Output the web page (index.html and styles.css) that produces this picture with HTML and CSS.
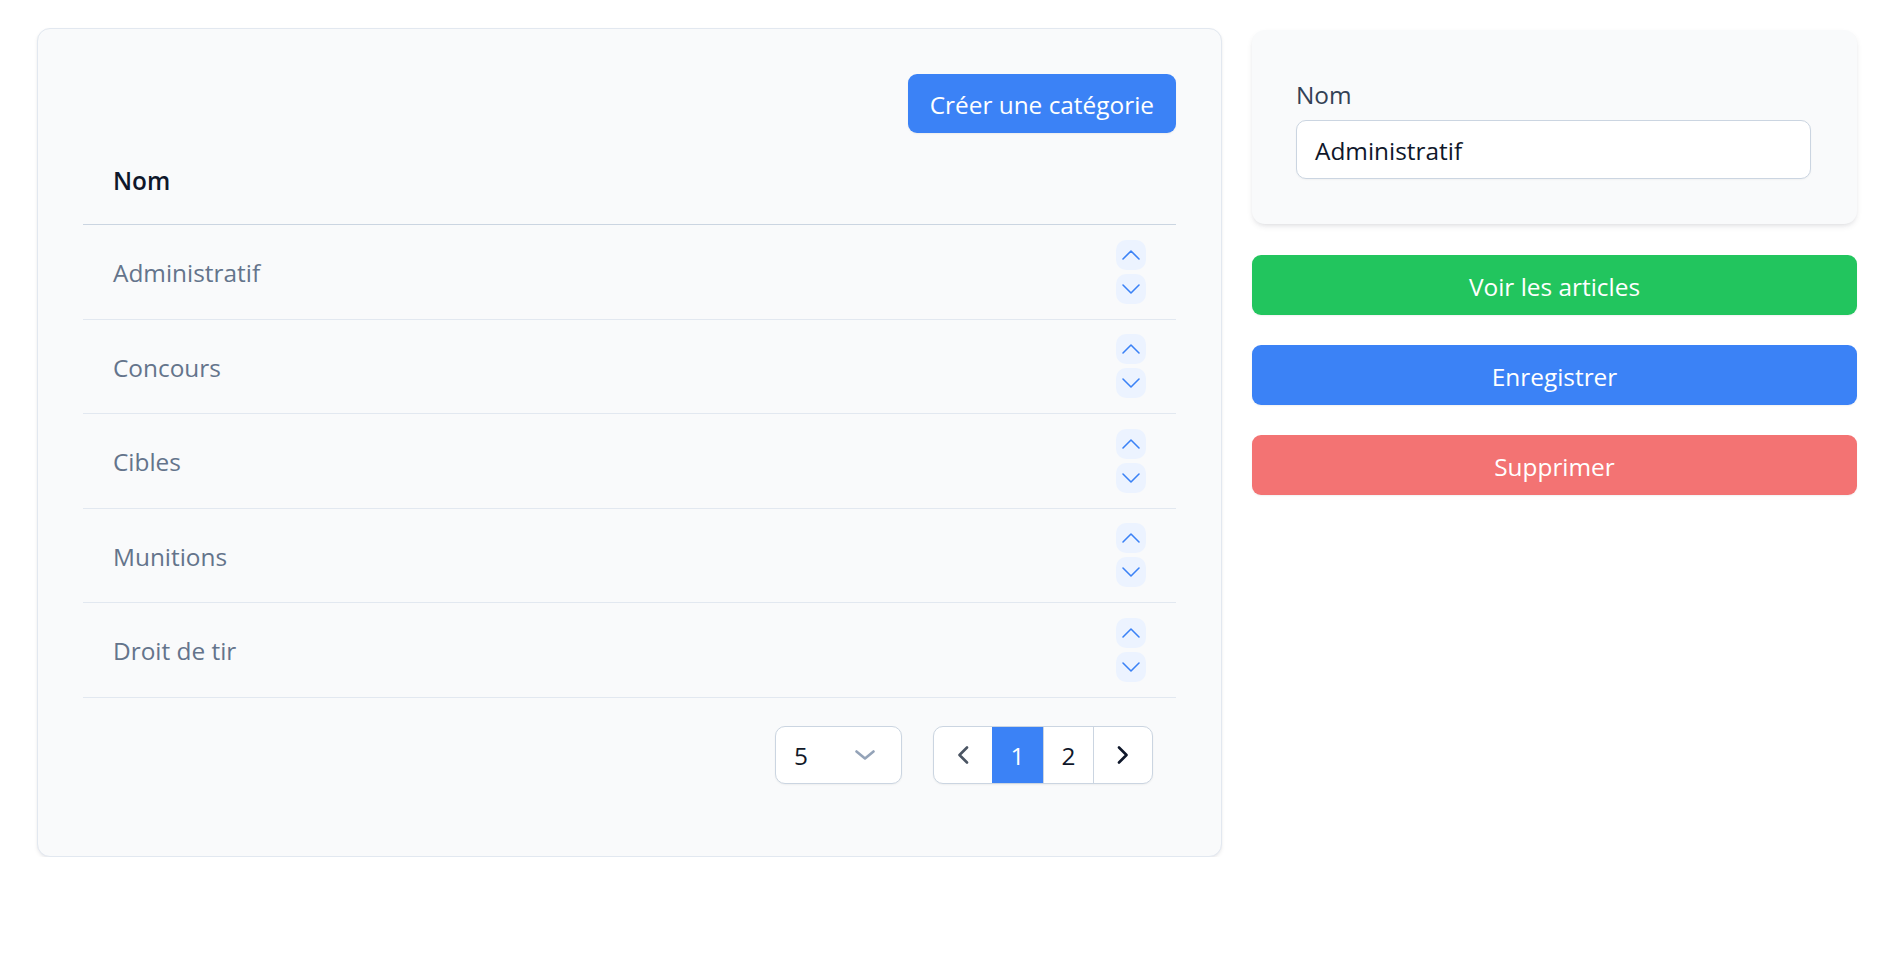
FILE: index.html
```html
<!DOCTYPE html>
<html lang="fr">
<head>
<meta charset="utf-8">
<title>Catégories</title>
<link rel="stylesheet" href="styles.css">
</head>
<body>
<div class="page">
  <section class="list-card">
    <div class="toolbar">
      <button class="btn btn-blue btn-create">Créer une catégorie</button>
    </div>
    <div class="table">
      <div class="thead">Nom</div>
      <div class="row">
        <span class="name">Administratif</span>
        <div class="order">
          <button class="ord"><svg viewBox="0 0 30 30" width="30" height="30"><path d="M7 19 L15 11 L23 19" /></svg></button>
          <button class="ord"><svg viewBox="0 0 30 30" width="30" height="30"><path d="M7 11 L15 19 L23 11" /></svg></button>
        </div>
      </div>
      <div class="row">
        <span class="name">Concours</span>
        <div class="order">
          <button class="ord"><svg viewBox="0 0 30 30" width="30" height="30"><path d="M7 19 L15 11 L23 19" /></svg></button>
          <button class="ord"><svg viewBox="0 0 30 30" width="30" height="30"><path d="M7 11 L15 19 L23 11" /></svg></button>
        </div>
      </div>
      <div class="row">
        <span class="name">Cibles</span>
        <div class="order">
          <button class="ord"><svg viewBox="0 0 30 30" width="30" height="30"><path d="M7 19 L15 11 L23 19" /></svg></button>
          <button class="ord"><svg viewBox="0 0 30 30" width="30" height="30"><path d="M7 11 L15 19 L23 11" /></svg></button>
        </div>
      </div>
      <div class="row">
        <span class="name">Munitions</span>
        <div class="order">
          <button class="ord"><svg viewBox="0 0 30 30" width="30" height="30"><path d="M7 19 L15 11 L23 19" /></svg></button>
          <button class="ord"><svg viewBox="0 0 30 30" width="30" height="30"><path d="M7 11 L15 19 L23 11" /></svg></button>
        </div>
      </div>
      <div class="row">
        <span class="name">Droit de tir</span>
        <div class="order">
          <button class="ord"><svg viewBox="0 0 30 30" width="30" height="30"><path d="M7 19 L15 11 L23 19" /></svg></button>
          <button class="ord"><svg viewBox="0 0 30 30" width="30" height="30"><path d="M7 11 L15 19 L23 11" /></svg></button>
        </div>
      </div>
    </div>
    <div class="pager-bar">
      <div class="select">
        <span class="sel-val">5</span>
        <svg class="sel-chev" viewBox="0 0 20 10" width="20" height="10"><path d="M1.5 1.5 L10 8.5 L18.5 1.5" /></svg>
      </div>
      <div class="pager">
        <button class="pg pg-prev"><svg viewBox="0 0 12 18" width="12" height="18"><path d="M10 1.5 L2.5 9 L10 16.5" /></svg></button>
        <button class="pg pg-num pg-active">1</button>
        <button class="pg pg-num">2</button>
        <button class="pg pg-next"><svg viewBox="0 0 12 18" width="12" height="18"><path d="M2 1.5 L9.5 9 L2 16.5" /></svg></button>
      </div>
    </div>
  </section>

  <aside class="side">
    <div class="form-card">
      <label class="label">Nom</label>
      <div class="input">Administratif</div>
    </div>
    <button class="btn btn-wide btn-green">Voir les articles</button>
    <button class="btn btn-wide btn-blue">Enregistrer</button>
    <button class="btn btn-wide btn-red">Supprimer</button>
  </aside>
</div>
</body>
</html>
```

FILE: styles.css
```css
* { box-sizing: border-box; }

body {
  margin: 0;
  background: #ffffff;
  font-family: "Open Sans", "Noto Sans", "Liberation Sans", sans-serif;
  font-size: 24.4px;
  line-height: 36px;
  color: #111827;
}

button {
  font-family: inherit;
  font-size: inherit;
  line-height: inherit;
  border: 0;
  margin: 0;
  padding: 0;
  background: none;
  cursor: pointer;
}

.page {
  display: grid;
  grid-template-columns: 1185px 605px;
  column-gap: 30px;
  align-items: start;
  padding: 28px 0 0 37px;
}

/* left card */
.list-card {
  background: #f9fafb;
  border: 1px solid #e2e8f0;
  border-radius: 13px;
  box-shadow: 0 2px 4px rgba(15, 23, 42, 0.06), 0 1px 2px rgba(15, 23, 42, 0.04);
  padding: 45px;
}

.toolbar {
  display: flex;
  justify-content: flex-end;
}

.btn {
  color: #ffffff;
  border-radius: 9px;
  box-shadow: 0 1px 2px rgba(0, 0, 0, 0.06);
}

.btn-create {
  height: 59px;
  padding: 3px 22px 0;
}

.btn-blue { background: #3b82f6; }
.btn-green { background: #22c55e; }
.btn-red { background: #f37373; }

.thead {
  padding: 30px 30px 25px;
  font-weight: 600;
  color: #0f172a;
  border-bottom: 1px solid #cbd5e1;
}

.row {
  height: 94.5px;
  display: flex;
  align-items: center;
  justify-content: space-between;
  padding: 0 30px;
  border-bottom: 1px solid #e2e8f0;
}

.name {
  color: #64748b;
  padding-top: 3px;
}

.order {
  display: flex;
  flex-direction: column;
  gap: 4px;
}

.ord {
  width: 30px;
  height: 30px;
  border-radius: 10px;
  background: #ecf3ff;
  display: flex;
}

.ord svg path {
  fill: none;
  stroke: #3b82f6;
  stroke-width: 1.6;
  stroke-linecap: round;
  stroke-linejoin: round;
}

/* pagination */
.pager-bar {
  display: flex;
  justify-content: flex-end;
  align-items: center;
  gap: 31px;
  padding: 28px 23px 27px 0;
}

.select {
  width: 127px;
  height: 58px;
  background: #ffffff;
  border: 1.5px solid #cbd5e1;
  border-radius: 10px;
  display: flex;
  align-items: center;
  justify-content: space-between;
  padding: 0 26px 0 18px;
  color: #111827;
  box-shadow: 0 1px 2px rgba(0, 0, 0, 0.05);
}

.sel-val { padding-top: 2px; }

.sel-chev path {
  fill: none;
  stroke: #94a3b8;
  stroke-width: 2.6;
  stroke-linecap: round;
  stroke-linejoin: round;
}

.pager {
  display: flex;
  height: 58px;
  background: #ffffff;
  border: 1.5px solid #cbd5e1;
  border-radius: 10px;
  overflow: hidden;
  box-shadow: 0 1px 2px rgba(0, 0, 0, 0.05);
}

.pg {
  height: 100%;
  width: 50px;
  display: flex;
  align-items: center;
  justify-content: center;
  color: #0f172a;
  border-left: 1.5px solid #cbd5e1;
}

.pg-num { padding-top: 2px; }

.pg-prev {
  width: 58px;
  border-left: 0;
}

.pg-next { width: 59px; }

.pg-active {
  background: #3b82f6;
  color: #ffffff;
  border-left: 0;
  margin: -1.5px 0;
  height: calc(100% + 3px);
  width: 51px;
}

.pg-prev path,
.pg-next path {
  fill: none;
  stroke-width: 2.6;
  stroke-linecap: round;
  stroke-linejoin: round;
}

.pg-prev path { stroke: #4b5563; }
.pg-next path { stroke: #0f172a; }

/* right side */
.side {
  margin-top: 2px;
  display: flex;
  flex-direction: column;
}

.form-card {
  background: #f9fafb;
  border-radius: 13px;
  box-shadow: 0 3px 6px -1px rgba(15, 23, 42, 0.1), 0 2px 4px -2px rgba(15, 23, 42, 0.08);
  padding: 45px 46px 45px 44px;
  display: flex;
  flex-direction: column;
}

.label {
  color: #334155;
  padding-top: 2px;
  margin-bottom: 7px;
}

.input {
  height: 59px;
  background: #ffffff;
  border: 1.5px solid #cbd5e1;
  border-radius: 10px;
  padding: 3px 18px 0;
  display: flex;
  align-items: center;
  color: #0f172a;
  box-shadow: 0 1px 2px rgba(0, 0, 0, 0.04);
}

.btn-wide {
  height: 60px;
  width: 100%;
  margin-top: 30px;
  padding-top: 4px;
  text-align: center;
}

.side .btn-green { margin-top: 31px; }
```
